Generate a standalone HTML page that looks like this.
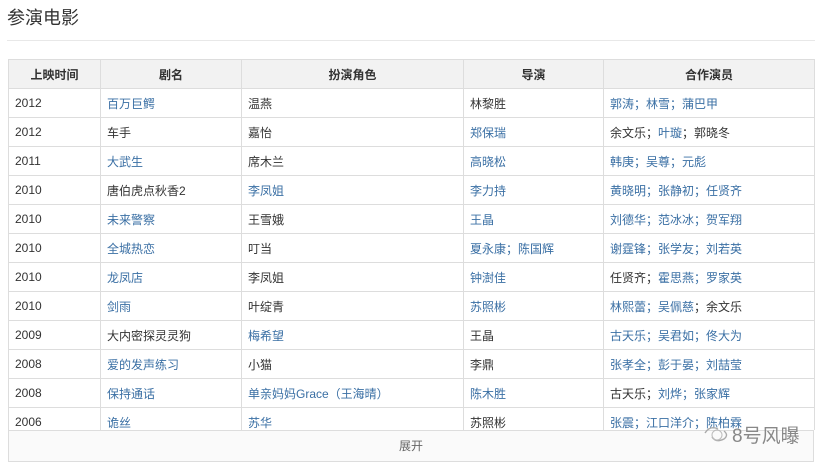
<!DOCTYPE html>
<html><head><meta charset="utf-8">
<style>
body{margin:0;width:829px;height:471px;background:#fff;font-family:"Liberation Sans","Noto Sans CJK SC",sans-serif;color:#333;position:relative;overflow:hidden}
h2{position:absolute;left:7px;top:5px;margin:0;font-size:18px;font-weight:normal;color:#333;line-height:26px}
.hr{position:absolute;left:7px;right:14px;top:40px;border-top:1px solid #e8e8e8}
.wrap{position:absolute;left:8px;top:59px;width:805px;height:371px;overflow:hidden;border-left:1px solid #ddd;border-right:1px solid #ddd}
table{border-collapse:collapse;width:806px;margin-left:-1px;table-layout:fixed;font-size:12px}
td,th{border:1px solid #ddd;height:28px;padding:0 0 0 6px;text-align:left;white-space:nowrap;overflow:hidden}
th{background:#f2f2f2;text-align:center;font-weight:bold;padding:0;border-top:1px solid #ddd}
a{color:#3a6fa4;text-decoration:none}
.more{position:absolute;left:8px;top:430px;width:804px;height:30px;border:1px solid #ddd;border-top:1px solid #ddd;text-align:center;line-height:30px;font-size:12px;color:#666;background:#fafafa}
.wm{position:absolute;left:702px;top:421px;font-size:19px;color:#888;letter-spacing:0px}
</style></head><body>
<h2>参演电影</h2>
<div class="hr"></div>
<div class="wrap"><table>
<colgroup><col style="width:92px"><col style="width:141px"><col style="width:222px"><col style="width:140px"><col style="width:211px"></colgroup>
<tr><th>上映时间</th><th>剧名</th><th>扮演角色</th><th>导演</th><th>合作演员</th></tr>
<tr><td>2012</td><td><a>百万巨鳄</a></td><td>温燕</td><td>林黎胜</td><td><a>郭涛；林雪；蒲巴甲</a></td></tr>
<tr><td>2012</td><td>车手</td><td>嘉怡</td><td><a>郑保瑞</a></td><td>余文乐；<a>叶璇</a>；郭晓冬</td></tr>
<tr><td>2011</td><td><a>大武生</a></td><td>席木兰</td><td><a>高晓松</a></td><td><a>韩庚；吴尊；元彪</a></td></tr>
<tr><td>2010</td><td>唐伯虎点秋香2</td><td><a>李凤姐</a></td><td><a>李力持</a></td><td><a>黄晓明；张静初；任贤齐</a></td></tr>
<tr><td>2010</td><td><a>未来警察</a></td><td>王雪娥</td><td><a>王晶</a></td><td><a>刘德华；范冰冰；贺军翔</a></td></tr>
<tr><td>2010</td><td><a>全城热恋</a></td><td>叮当</td><td><a>夏永康；陈国辉</a></td><td><a>谢霆锋；张学友；刘若英</a></td></tr>
<tr><td>2010</td><td><a>龙凤店</a></td><td>李凤姐</td><td><a>钟澍佳</a></td><td>任贤齐；<a>霍思燕；罗家英</a></td></tr>
<tr><td>2010</td><td><a>剑雨</a></td><td>叶绽青</td><td><a>苏照彬</a></td><td><a>林熙蕾；吴佩慈</a>；余文乐</td></tr>
<tr><td>2009</td><td>大内密探灵灵狗</td><td><a>梅希望</a></td><td>王晶</td><td><a>古天乐；吴君如；佟大为</a></td></tr>
<tr><td>2008</td><td><a>爱的发声练习</a></td><td>小猫</td><td>李鼎</td><td><a>张孝全；彭于晏；刘喆莹</a></td></tr>
<tr><td>2008</td><td><a>保持通话</a></td><td><a>单亲妈妈Grace（王海晴）</a></td><td><a>陈木胜</a></td><td>古天乐；<a>刘烨；张家辉</a></td></tr>
<tr><td>2006</td><td><a>诡丝</a></td><td><a>苏华</a></td><td>苏照彬</td><td><a>张震；江口洋介；陈柏霖</a></td></tr>
</table></div>
<div class="more">展开</div>
<div class="wm"><svg width="30" height="22" viewBox="0 0 30 22" style="vertical-align:-3px"><path d="M3 10 Q8 2 16 6 M10 14 Q14 20 22 16 Q27 12 22 8" fill="none" stroke="#aaa" stroke-width="1.4"/><circle cx="15" cy="12" r="5" fill="none" stroke="#bbb"/></svg>8号风曝</div>
</body></html>
